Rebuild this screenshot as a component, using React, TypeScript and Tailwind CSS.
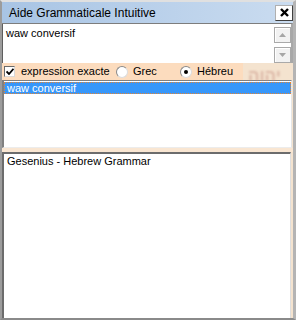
import React from 'react';

const Arrow = ({ up }: { up?: boolean }) => (
  <svg width="7" height="4" viewBox="0 0 7 4">
    <path d={up ? 'M0 4 L3.5 0 L7 4 Z' : 'M0 0 L3.5 4 L7 0 Z'} fill="#a6a6a6" />
  </svg>
);

const ScrollButton = ({ up }: { up?: boolean }) => (
  <div className="h-[16px] w-[17px] flex items-center justify-center bg-[#f2f2f2] border border-[#a9a9a9] shadow-[inset_1px_1px_0_#ffffff]">
    <Arrow up={up} />
  </div>
);

const Radio = ({ checked }: { checked?: boolean }) => (
  <div className="w-[12px] h-[12px] rounded-full bg-white border border-[#8a8a8a] border-r-[#dcdcdc] border-b-[#dcdcdc] flex items-center justify-center shrink-0">
    {checked && <div className="w-[4px] h-[4px] rounded-full bg-black" />}
  </div>
);

export default function App() {
  return (
    <div className="relative w-[296px] h-[320px] overflow-hidden flex flex-col bg-[#f4e3cf] text-black font-['Liberation_Sans',Arial,sans-serif] border-t-2 border-l-2 border-r-[3px] border-b-2 border-t-[#e0e0e0] border-l-[#9c9c9c] border-r-[#b4b4b4] border-b-[#8a8a8a]">
      {/* faded parchment lettering */}
      <span className="absolute left-[246px] top-[61px] text-[17px] font-bold text-[#c58e80] opacity-50 blur-[0.8px] select-none">יהוה</span>

      {/* Title bar */}
      <div className="h-[21px] shrink-0 flex items-center justify-between bg-linear-to-r from-[#a8c4e4] to-[#cadcf0]">
        <span className="pl-[7px] text-[12px] leading-none">Aide Grammaticale Intuitive</span>
        <button className="w-[18px] h-[16px] flex items-center justify-center bg-white border border-[#b0b0b0] border-r-[#404040] border-b-[#404040]">
          <svg width="9" height="9" viewBox="0 0 9 9">
            <path d="M1 1 L8 8 M8 1 L1 8" stroke="#000" strokeWidth="2.4" />
          </svg>
        </button>
      </div>

      {/* Search text area */}
      <div className="h-[40px] shrink-0 flex border-t border-[#7d7d7d] border-r-2 border-r-[#a8a8a8] mr-[0px]">
        <div className="flex-1 bg-white border-l border-[#5e5e5e] pl-[3px] pt-[3px] text-[11px] leading-[13px]">waw conversif</div>
        <div className="w-[17px] bg-white flex flex-col pt-[3px] gap-[4px]">
          <ScrollButton up />
          <ScrollButton />
        </div>
      </div>

      {/* Options */}
      <div className="h-[17px] shrink-0 flex">
        <div className="w-[241px] bg-[#fcdcbe] flex items-center text-[11px]">
          <div className="ml-[2px] w-[11px] h-[11px] bg-white border border-[#6a6a6a] border-r-[#d8d8d8] border-b-[#d8d8d8] flex items-center justify-center shrink-0">
            <svg width="8" height="7" viewBox="0 0 8 7">
              <path d="M0.5 3.5 L3 6 L7.5 0.8" stroke="#000" strokeWidth="1.8" fill="none" />
            </svg>
          </div>
          <span className="ml-[6px] w-[95px] shrink-0">expression exacte</span>
          <Radio />
          <span className="ml-[5px] w-[47px] shrink-0">Grec</span>
          <Radio checked />
          <span className="ml-[5px]">Hébreu</span>
        </div>
      </div>

      {/* Results list */}
      <div className="h-[68px] shrink-0 mr-[1px] bg-white border-t border-l-2 border-[#808080] border-r border-b border-r-[#e6e6e6] border-b-[#ececec] pt-[1px]">
        <div className="h-[12px] bg-[#3797fa] border border-dotted border-[#e38434] text-white text-[11px] leading-[10px] pl-[2px]">
          waw conversif
        </div>
      </div>

      <div className="h-[4px] shrink-0 bg-[#f9e6d2]" />

      {/* Reference pane */}
      <div className="flex-1 mr-[2px] bg-white border-t-2 border-l-2 border-[#6c6c6c] border-r border-r-[#dedede] pl-[3px] pt-[1px] text-[11px] leading-[13px]">
        Gesenius - Hebrew Grammar
      </div>
    </div>
  );
}
